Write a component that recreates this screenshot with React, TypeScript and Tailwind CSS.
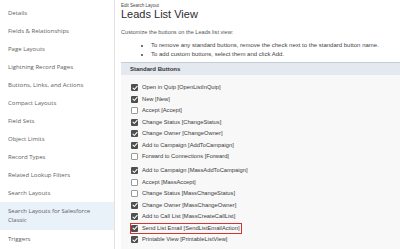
const navItems = [
  "Details",
  "Fields & Relationships",
  "Page Layouts",
  "Lightning Record Pages",
  "Buttons, Links, and Actions",
  "Compact Layouts",
  "Field Sets",
  "Object Limits",
  "Record Types",
  "Related Lookup Filters",
  "Search Layouts",
];

interface ButtonRow {
  label: string;
  checked: boolean;
  highlight?: boolean;
}

const listButtons: ButtonRow[] = [
  { label: "Open in Quip [OpenListInQuip]", checked: true },
  { label: "New [New]", checked: true },
  { label: "Accept [Accept]", checked: false },
  { label: "Change Status [ChangeStatus]", checked: true },
  { label: "Change Owner [ChangeOwner]", checked: true },
  { label: "Add to Campaign [AddToCampaign]", checked: true },
  { label: "Forward to Connections [Forward]", checked: false },
];

const massButtons: ButtonRow[] = [
  { label: "Add to Campaign [MassAddToCampaign]", checked: true },
  { label: "Accept [MassAccept]", checked: false },
  { label: "Change Status [MassChangeStatus]", checked: false },
  { label: "Change Owner [MassChangeOwner]", checked: true },
  { label: "Add to Call List [MassCreateCallList]", checked: true },
  { label: "Send List Email [SendListEmailAction]", checked: true, highlight: true },
  { label: "Printable View [PrintableListView]", checked: true },
];

function Checkbox({ checked }: { checked: boolean }) {
  if (!checked) {
    return <span className="h-[7px] w-[7px] shrink-0 rounded-[1px] border border-[#9a9a9a] bg-white" />;
  }
  return (
    <span className="flex h-[7px] w-[7px] shrink-0 items-center justify-center rounded-[1px] bg-[#4f4f4f]">
      <svg viewBox="0 0 8 8" className="h-[6px] w-[6px]" fill="none">
        <path d="M1.3 4.2 3.1 6 6.8 1.8" stroke="white" strokeWidth={1.4} strokeLinecap="round" strokeLinejoin="round" />
      </svg>
    </span>
  );
}

function Row({ row, className = "" }: { row: ButtonRow; className?: string }) {
  return (
    <div className={`flex h-[11.5px] items-center ${className}`}>
      <div
        className={`inline-flex h-[11px] items-center gap-[4px] border pr-[2px] ${
          row.highlight ? "border-[#d8322e]" : "border-transparent"
        }`}
      >
        <Checkbox checked={row.checked} />
        <span className="whitespace-nowrap text-[5.75px] text-[#3a3a3a]">{row.label}</span>
      </div>
    </div>
  );
}

export default function App() {
  return (
    <div className="flex h-[249px] w-[400px] overflow-hidden bg-white font-['Liberation_Sans',Arial,sans-serif]">
      {/* Sidebar */}
      <div className="w-[115px] shrink-0 border-r border-[#e2e2e2] pt-[4px] font-['Open_Sans',sans-serif] text-[6px] text-[#5e5e5e]">
        {navItems.map((item) => (
          <div key={item} className="flex h-[18px] items-center pl-[8px]">
            {item}
          </div>
        ))}
        <div className="flex h-[28px] flex-col justify-center bg-[#e9f1f9] pl-[8px] leading-[9px]">
          <span>Search Layouts for Salesforce</span>
          <span>Classic</span>
        </div>
        <div className="flex h-[18px] items-center pl-[8px]">Triggers</div>
      </div>

      {/* Content */}
      <div className="min-w-0 flex-1 pl-[6px] pt-[3px]">
        <p className="text-[4.5px] leading-[5px] text-[#444]">Edit Search Layout</p>
        <h1 className="text-[11px] leading-[13px] text-[#2b2b2b]">Leads List View</h1>
        <p className="mt-[8px] text-[5.6px] leading-[7px] text-[#555]">
          Customize the buttons on the Leads list view:
        </p>
        <ul className="mt-[5px] list-disc pl-[30px] text-[6px] leading-[9px] text-[#444]">
          <li className="whitespace-nowrap">
            To remove any standard buttons, remove the check next to the standard button name.
          </li>
          <li className="whitespace-nowrap">To add custom buttons, select them and click Add.</li>
        </ul>

        <div className="mt-[3px] h-[200px] border-t border-[#c5ccd8] bg-[#f8f8f8]">
          <div className="flex h-[12px] items-center bg-[#e4e8ef] pl-[9px] text-[6px] font-bold text-[#333]">
            Standard Buttons
          </div>
          <div className="pl-[9px] pt-[7px]">
            {listButtons.map((row) => (
              <Row key={row.label} row={row} />
            ))}
            {massButtons.map((row, i) => (
              <Row key={row.label} row={row} className={i === 0 ? "mt-[2.5px]" : ""} />
            ))}
          </div>
        </div>
      </div>
    </div>
  );
}
